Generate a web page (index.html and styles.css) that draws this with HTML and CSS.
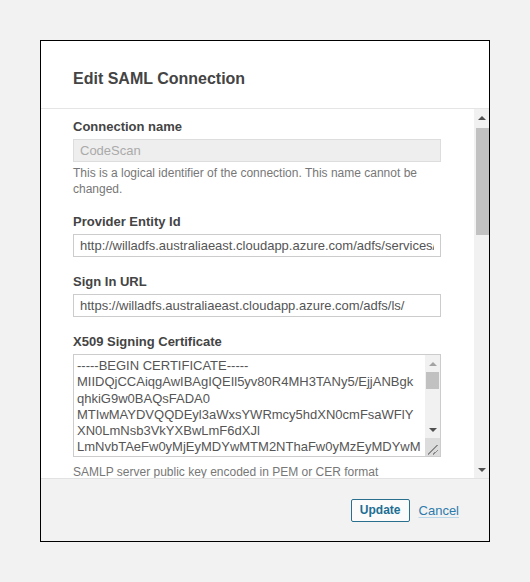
FILE: index.html
```html
<!DOCTYPE html>
<html lang="en">
<head>
<meta charset="utf-8">
<title>Edit SAML Connection</title>
<link rel="stylesheet" href="styles.css">
</head>
<body>
<div class="dialog">
  <div class="dialog-header">
    <h2 class="dialog-title">Edit SAML Connection</h2>
  </div>
  <div class="dialog-main">
    <div class="dialog-body">
      <div class="field">
        <label class="field-label">Connection name</label>
        <input class="field-input" type="text" value="CodeScan" disabled>
        <p class="field-help">This is a logical identifier of the connection. This name cannot be changed.</p>
      </div>
      <div class="field">
        <label class="field-label">Provider Entity Id</label>
        <input class="field-input" type="text" value="http://willadfs.australiaeast.cloudapp.azure.com/adfs/services/trust">
      </div>
      <div class="field">
        <label class="field-label">Sign In URL</label>
        <input class="field-input" type="text" value="https://willadfs.australiaeast.cloudapp.azure.com/adfs/ls/">
      </div>
      <div class="field">
        <label class="field-label">X509 Signing Certificate</label>
        <div class="cert-box">
          <textarea class="cert-text" wrap="off">-----BEGIN CERTIFICATE-----
MIIDQjCCAiqgAwIBAgIQEIl5yv80R4MH3TANy5/EjjANBgk
qhkiG9w0BAQsFADA0
MTIwMAYDVQQDEyl3aWxsYWRmcy5hdXN0cmFsaWFlY
XN0LmNsb3VkYXBwLmF6dXJl
LmNvbTAeFw0yMjEyMDYwMTM2NThaFw0yMzEyMDYwM
TM2NThaMDQxMjAwBgNVBAMT
KXdpbGxhZGZzLmF1c3RyYWxpYWVhc3QuY2xvdWRhc
HAuYXp1cmUuY29tMIIBIjAN</textarea>
          <div class="tscroll">
            <div class="sb-btn"><span class="arrow-up arrow-light"></span></div>
            <div class="sb-track"><div class="tscroll-thumb"></div></div>
            <div class="sb-btn"><span class="arrow-down"></span></div>
            <div class="tscroll-corner"></div>
          </div>
        </div>
        <p class="field-help field-help-wide">SAMLP server public key encoded in PEM or CER format</p>
      </div>
    </div>
    <div class="vscroll">
      <div class="sb-btn"><span class="arrow-up"></span></div>
      <div class="sb-track"><div class="vscroll-thumb"></div></div>
      <div class="sb-btn"><span class="arrow-down"></span></div>
    </div>
  </div>
  <div class="dialog-footer">
    <button class="btn-update" type="button">Update</button>
    <a class="link-cancel" href="#">Cancel</a>
  </div>
</div>
</body>
</html>
```
FILE: styles.css
```css
html, body {
  margin: 0;
  padding: 0;
}
body {
  background: #f2f2f2;
  font-family: "Liberation Sans", Arial, sans-serif;
  color: #444;
}
.dialog {
  margin: 40px 0 0 40px;
  width: 448px;
  height: 500px;
  border: 1px solid #000;
  background: #fff;
  display: flex;
  flex-direction: column;
}
.dialog-header {
  height: 68px;
  box-sizing: border-box;
  padding: 28px 32px 0;
  border-bottom: 1px solid #e5e5e5;
  flex: none;
}
.dialog-title {
  margin: 0;
  font-size: 16px;
  line-height: 20px;
  font-weight: bold;
  color: #444;
}
.dialog-main {
  flex: 1;
  min-height: 0;
  display: flex;
}
.dialog-body {
  flex: 1;
  min-width: 0;
  overflow: hidden;
  padding: 9px 33px 0 32px;
}

/* scrollbar parts */
.vscroll,
.tscroll {
  flex: none;
  width: 15px;
  background: #f1f1f1;
  display: flex;
  flex-direction: column;
}
.sb-btn {
  flex: none;
  height: 17px;
  display: flex;
  align-items: center;
  justify-content: center;
}
.sb-track {
  flex: 1;
  min-height: 0;
}
.vscroll-thumb {
  height: 107px;
  margin: 2px 0 0 2px;
  background: #c1c1c1;
}
.tscroll-thumb {
  height: 17px;
  margin: 0 1px;
  background: #c1c1c1;
}
.tscroll-corner {
  flex: none;
  height: 18px;
  background:
    linear-gradient(135deg, transparent 44%, #8c8c8c 44%, #8c8c8c 52%, transparent 52%, transparent 70%, #8c8c8c 70%, #8c8c8c 78%, transparent 78%) right 2px bottom 1px / 10px 10px no-repeat,
    #dcdcdc;
}
.arrow-up {
  width: 0;
  height: 0;
  border-left: 4px solid transparent;
  border-right: 4px solid transparent;
  border-bottom: 4px solid #505050;
}
.arrow-down {
  width: 0;
  height: 0;
  border-left: 4px solid transparent;
  border-right: 4px solid transparent;
  border-top: 4px solid #505050;
}
.arrow-light {
  border-bottom-color: #a3a3a3;
}

.field {
  margin-bottom: 16px;
}
.field-label {
  display: block;
  font-size: 13px;
  line-height: 17px;
  font-weight: bold;
  color: #444;
  margin-bottom: 4px;
}
.field-input {
  display: block;
  box-sizing: border-box;
  width: 368px;
  height: 23px;
  margin: 0;
  padding: 0 6px;
  border: 1px solid #cccccc;
  border-radius: 0;
  font-family: "Liberation Sans", Arial, sans-serif;
  font-size: 13px;
  color: #555;
  background: #fff;
  outline: none;
}
.field-input:disabled {
  background: #eeeeee;
  border-color: #dddddd;
  color: #aaaaaa;
}
.cert-box {
  display: flex;
  box-sizing: border-box;
  width: 368px;
  height: 103px;
  border: 1px solid #cccccc;
  background: #fff;
}
.cert-text {
  flex: 1;
  min-width: 0;
  margin: 0;
  padding: 3px 3px 0;
  border: 0;
  resize: none;
  font-family: "Liberation Sans", Arial, sans-serif;
  font-size: 13px;
  line-height: 16.25px;
  color: #555;
  background: #fff;
  overflow: hidden;
  white-space: pre;
  outline: none;
}
.field-help {
  margin: 3px 0 0;
  font-size: 12px;
  line-height: 16px;
  color: #777;
}
.field-help-wide {
  margin-top: 7px;
}
.dialog-footer {
  flex: none;
  height: 63px;
  box-sizing: border-box;
  border-top: 1px solid #e2e2e2;
  background: #f2f2f2;
  display: flex;
  align-items: center;
  justify-content: flex-end;
  padding-right: 30px;
  gap: 9px;
}
.btn-update {
  height: 23px;
  box-sizing: border-box;
  padding: 0 8px;
  border: 1px solid #2a6f8d;
  border-radius: 2px;
  background: #fbfbfb;
  color: #1c6e93;
  font-family: "Liberation Sans", Arial, sans-serif;
  font-size: 12px;
  font-weight: bold;
  line-height: 21px;
  margin-top: 1px;
}
.link-cancel {
  font-size: 13px;
  color: #2d7bab;
  text-decoration: underline;
  text-decoration-color: #b9d8ea;
  text-underline-offset: 2px;
  margin-top: 1px;
}
```
